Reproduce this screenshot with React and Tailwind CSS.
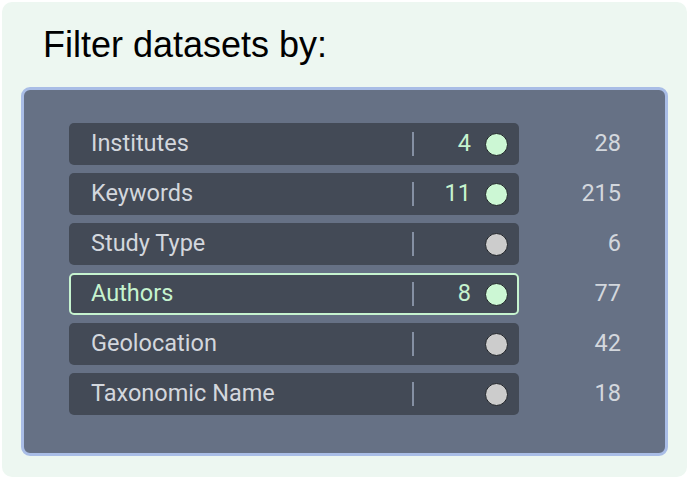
import React from "react";

const filters = [
  { name: "Institutes", selected: 4, total: 28 },
  { name: "Keywords", selected: 11, total: 215 },
  { name: "Study Type", selected: null, total: 6 },
  { name: "Authors", selected: 8, total: 77, active: true },
  { name: "Geolocation", selected: null, total: 42 },
  { name: "Taxonomic Name", selected: null, total: 18 },
];

const FilterRow = ({ filter }) => {
  const on = filter.selected !== null;
  return (
    <div className="flex items-center gap-[40px]">
      <div
        className={
          "flex items-center h-[42px] w-[450px] rounded-[5px] bg-[#434a56] " +
          (filter.active
            ? "border-2 border-[#c6f3cf] pl-[20px] pr-[9px]"
            : "pl-[22px] pr-[11px]")
        }
      >
        <span
          className={
            "flex-1 text-[23.5px] " +
            (filter.active ? "text-[#c6f3cf]" : "text-[#d3d7dd]")
          }
        >
          {filter.name}
        </span>
        <span className="w-[2px] h-[24px] bg-[#8590a3]" />
        <span className="w-[57px] text-right text-[23.5px] text-[#c6f3cf]">
          {on ? filter.selected : ""}
        </span>
        <span
          className={
            "ml-[14px] w-[23px] h-[23px] rounded-full border border-[#1f2328] " +
            (on ? "bg-[#ccf7d4]" : "bg-[#cccccc]")
          }
        />
      </div>
      <span className="w-[62px] text-right text-[23.5px] text-[#d3d7dd]">
        {filter.total}
      </span>
    </div>
  );
};

export default function App() {
  return (
    <div className="w-[689px] h-[479px] bg-white p-[2px]">
      <div className="h-full rounded-[10px] bg-[#edf7f1] pt-[20px] px-[19px]">
        <h1 className="pl-[22px] text-[36px] leading-[46px] text-black font-['Liberation_Sans',Arial,sans-serif]">
          Filter datasets by:
        </h1>
        <div
          className="mt-[19px] w-[647px] h-[369px] rounded-[9px] border-[3px] border-[#a9bde6] bg-[#667185] pt-[33px] pl-[45px] flex flex-col gap-[8px]"
          style={{ fontFamily: "Roboto, 'Noto Sans', sans-serif" }}
        >
          {filters.map((f) => (
            <FilterRow key={f.name} filter={f} />
          ))}
        </div>
      </div>
    </div>
  );
}
